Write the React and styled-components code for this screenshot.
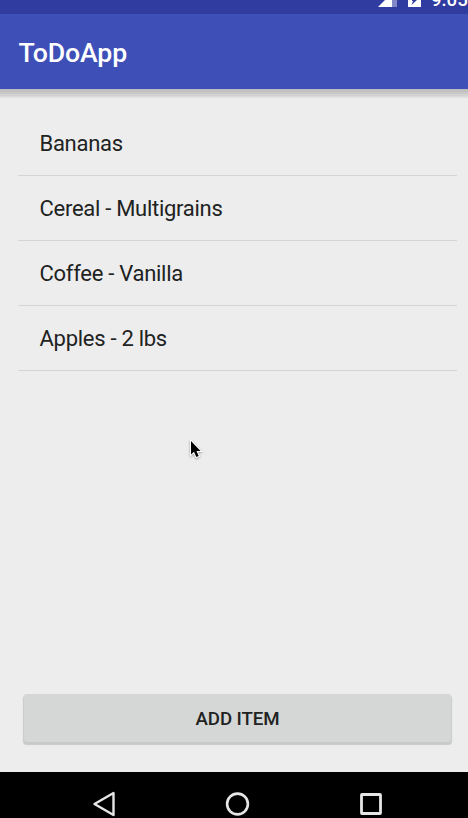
import React from "react";
import styled, { createGlobalStyle } from "styled-components";

const GlobalStyle = createGlobalStyle`
  * { box-sizing: border-box; }
  body { margin: 0; background: #ededed; font-family: Roboto, sans-serif; overflow: hidden; }
`;

const Screen = styled.div`
  position: relative;
  display: flex;
  flex-direction: column;
  width: 468px;
  height: 818px;
  overflow: hidden;
  background: #ededed;
  color: #212222;
`;

const StatusBar = styled.div`
  display: flex;
  flex: none;
  justify-content: flex-end;
  align-items: flex-end;
  height: 14px;
  overflow: hidden;
  background: #303c9f;
`;

const StatusIcons = styled.svg`
  flex: none;
  display: block;
  width: 53px;
  height: 14px;
`;

const Clock = styled.span`
  flex: none;
  width: 37px;
  height: 14px;
  line-height: 22px;
  margin-bottom: 11px;
  white-space: nowrap;
  font-size: 18.7px;
  font-weight: 500;
  color: #fff;
`;

const AppBar = styled.header`
  display: flex;
  flex: none;
  align-items: center;
  height: 75px;
  padding: 2px 19px 0 18.5px;
  background: #3e4fb8;
`;

const Title = styled.h1`
  margin: 0;
  font-size: 26.7px;
  line-height: 32px;
  font-weight: 500;
  letter-spacing: -0.15px;
  color: #fff;
`;

const BarShadow = styled.div`
  flex: none;
  height: 9px;
  background: linear-gradient(#bcbcbc 0 1px, #c1c1c1 1px 3px, #c8c8c8 3px 5px, #d2d2d2 5px 7px, #dadada 7px 8px, #e1e1e1 8px);
`;

const List = styled.ul`
  flex: 1;
  margin: 0;
  padding: 13px 11px 0 18px;
  list-style: none;
`;

const Item = styled.li`
  display: flex;
  align-items: center;
  height: 65px;
  padding-left: 21.5px;
  border-bottom: 1px solid #d5d5d5;
  font-size: 22px;
  letter-spacing: -0.28px;
`;

const Footer = styled.div`
  flex: none;
  height: 78px;
  padding: 0 17px 0 24px;
`;

const AddButton = styled.button`
  display: block;
  width: 100%;
  height: 48px;
  border: 0;
  border-radius: 3px;
  padding: 2px 0 0;
  background: #d5d7d6;
  box-shadow: 0 2px 0 #c8caca, 0 2px 1px 1px #c8c9c9;
  color: #212222;
  font: 500 18.7px Roboto, sans-serif;
  letter-spacing: -0.12px;
`;

const NavBar = styled.nav`
  flex: none;
  height: 46px;
  background: #000;
`;

const NavIcons = styled.svg`
  display: block;
  width: 468px;
  height: 46px;
`;

const Cursor = styled.svg`
  position: absolute;
  left: 188px;
  top: 438px;
  width: 16px;
  height: 23px;
  filter: drop-shadow(0 1px 1px rgba(0, 0, 0, 0.35));
`;

const items = ["Bananas", "Cereal - Multigrains", "Coffee - Vanilla", "Apples - 2 lbs"];

export default function App() {
  return (
    <Screen>
      <GlobalStyle />
      <StatusBar>
        <StatusIcons viewBox="378 0 53 14">
          <path d="M378 7L385 0H392V7Z" fill="#fff" />
          <path d="M392 0H397V7H392Z" fill="#8188c5" />
          <path d="M408 0H421V7H408Z" fill="#fff" />
          <path d="M412 0H417L411.5 5L413 1H412Z" fill="#303c9f" />
        </StatusIcons>
        <Clock>9:05</Clock>
      </StatusBar>
      <AppBar><Title>ToDoApp</Title></AppBar>
      <BarShadow />
      <List>
        {items.map((label) => <Item key={label}>{label}</Item>)}
      </List>
      <Footer><AddButton>ADD ITEM</AddButton></Footer>
      <NavBar>
        <NavIcons viewBox="0 772 468 46" fill="none" stroke="#e6e6e6" strokeLinejoin="round">
          <path d="M94.5 804L113.5 793V815Z" strokeWidth="2.4" />
          <circle cx="237.5" cy="804" r="10.4" strokeWidth="2.6" />
          <rect x="361.5" y="794.5" width="19" height="19" rx="0.5" strokeWidth="2.8" />
        </NavIcons>
      </NavBar>
      <Cursor viewBox="188 438 16 23">
        <path d="M191 441V454.5L194 451.8L196.3 457L198.7 456L196.5 451H200.5Z" fill="#000" stroke="#fff" strokeWidth="2" paintOrder="stroke" />
      </Cursor>
    </Screen>
  );
}
